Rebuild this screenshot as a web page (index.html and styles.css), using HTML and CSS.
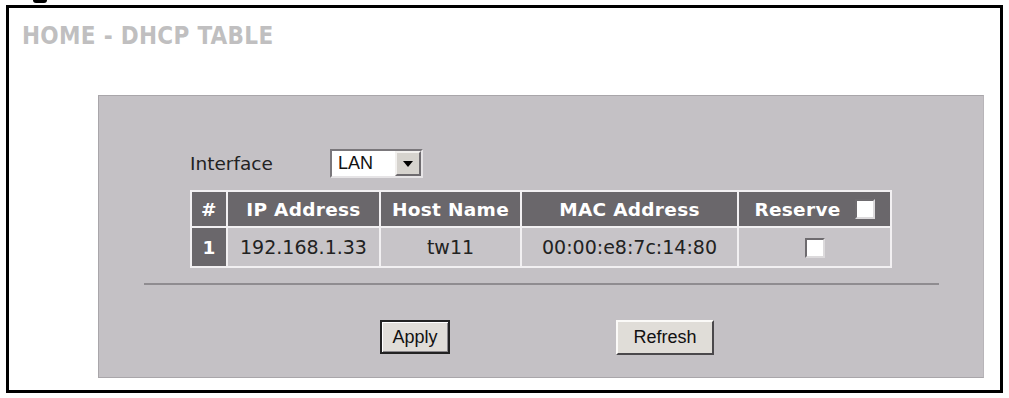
FILE: index.html
```html
<!DOCTYPE html>
<html lang="en">
<head>
    <meta charset="UTF-8">
    <title>Home - DHCP Table</title>
    <link rel="stylesheet" href="styles.css">
</head>
<body>

<div class="caption-tail"></div>

<div class="frame">
    <h1 class="title">HOME - DHCP TABLE</h1>

    <div class="panel">
        <div class="iface-row">
            <span class="iface-label">Interface</span>
            <div class="select">
                <span class="select-value">LAN</span>
                <span class="select-btn">
                    <svg width="10" height="6" viewBox="0 0 10 6"><path d="M0 0H10L5 6Z" fill="#000"/></svg>
                </span>
            </div>
        </div>

        <table class="dhcp">
            <tr>
                <th class="c-num">#</th>
                <th class="c-ip">IP Address</th>
                <th class="c-host">Host Name</th>
                <th class="c-mac">MAC Address</th>
                <th class="c-res"><span class="res-head">Reserve <span class="check"></span></span></th>
            </tr>
            <tr>
                <th>1</th>
                <td>192.168.1.33</td>
                <td>tw11</td>
                <td>00:00:e8:7c:14:80</td>
                <td><span class="check"></span></td>
            </tr>
        </table>

        <div class="rule"></div>

        <div class="actions">
            <button class="btn btn-default">Apply</button>
            <button class="btn btn-refresh">Refresh</button>
        </div>
    </div>
</div>

</body>
</html>
```

FILE: styles.css
```css
body {
    margin: 0;
    background: #fff;
    font-family: "DejaVu Sans", Verdana, sans-serif;
}
.caption-tail {
    width: 14px;
    height: 3px;
    margin-left: 33px;
    background: #000;
    border-radius: 0 0 7px 7px;
}
.frame {
    box-sizing: border-box;
    width: 997px;
    height: 388px;
    margin: 2px 0 0 6px;
    border: 3px solid #000;
}
.title {
    margin: 14px 0 0 13px;
    font-family: "DejaVu Sans Condensed", "DejaVu Sans", sans-serif;
    font-size: 24px;
    line-height: 28px;
    font-weight: bold;
    color: #c0bfc0;
    letter-spacing: 0.3px;
}
.panel {
    box-sizing: border-box;
    width: 886px;
    margin: 45px 0 0 89px;
    padding: 53px 0 22px 91px;
    background: #c4c1c5;
    border: 1px solid #a9a6aa;
    border-right-color: #b8b5b9;
}
.iface-row {
    display: flex;
    align-items: center;
    height: 29px;
}
.iface-label {
    width: 140px;
    font-size: 18.5px;
    color: #222;
}
.select {
    box-sizing: border-box;
    display: flex;
    align-items: center;
    width: 93px;
    height: 29px;
    background: #fff;
    border: 2px solid;
    border-color: #7a777b #e6e4e6 #e6e4e6 #7a777b;
}
.select-value {
    flex: 1;
    padding-left: 6px;
    font-family: "Liberation Sans", Arial, sans-serif;
    font-size: 18px;
    color: #111;
}
.select-btn {
    box-sizing: border-box;
    display: flex;
    align-items: center;
    justify-content: center;
    width: 26px;
    height: 25px;
    background: #d6d3ce;
    border: 2px solid;
    border-color: #f2f0ee #6e6b6f #6e6b6f #f2f0ee;
}
.dhcp {
    table-layout: fixed;
    width: 702px;
    margin-top: 12px;
    border-spacing: 2px;
    background: #f2f0f2;
}
.dhcp th, .dhcp td {
    padding: 0;
    text-align: center;
    white-space: nowrap;
}
.dhcp th {
    height: 34px;
    background: #6a676b;
    color: #fff;
    font-size: 18.5px;
    font-weight: bold;
    letter-spacing: 0.3px;
}
.dhcp td {
    height: 38px;
    background: #c7c4c8;
    color: #222;
    font-size: 19px;
}
.dhcp tr + tr th {
    height: 38px;
}
.c-num { width: 34px; }
.c-ip { width: 151px; }
.c-host { width: 139px; }
.c-mac { width: 215px; }
.c-res { width: 151px; }
.res-head {
    display: inline-flex;
    align-items: center;
    gap: 14px;
}
.check {
    box-sizing: border-box;
    display: inline-block;
    width: 20px;
    height: 20px;
    vertical-align: middle;
    background: #fff;
    border: 2px solid;
    border-color: #6e6b6f #dcdadc #dcdadc #6e6b6f;
}
.rule {
    height: 2px;
    margin: 15px 0 0 -46px;
    width: 795px;
    background: #8f8c90;
}
.actions {
    display: flex;
    margin: 35px 0 0 190px;
    gap: 166px;
}
.btn {
    box-sizing: border-box;
    height: 35px;
    padding: 0;
    background: #e0ddd8;
    font-family: "Liberation Sans", Arial, sans-serif;
    font-size: 18px;
    color: #111;
    border: 2px solid;
    border-color: #fbfaf8 #4a484b #4a484b #fbfaf8;
    cursor: pointer;
}
.btn-default {
    width: 70px;
    height: 34px;
    border: 2px solid #222;
    box-shadow: inset 1px 1px 0 #fff, inset -1px -1px 0 #8a878b;
}
.btn-refresh {
    width: 98px;
}
```
